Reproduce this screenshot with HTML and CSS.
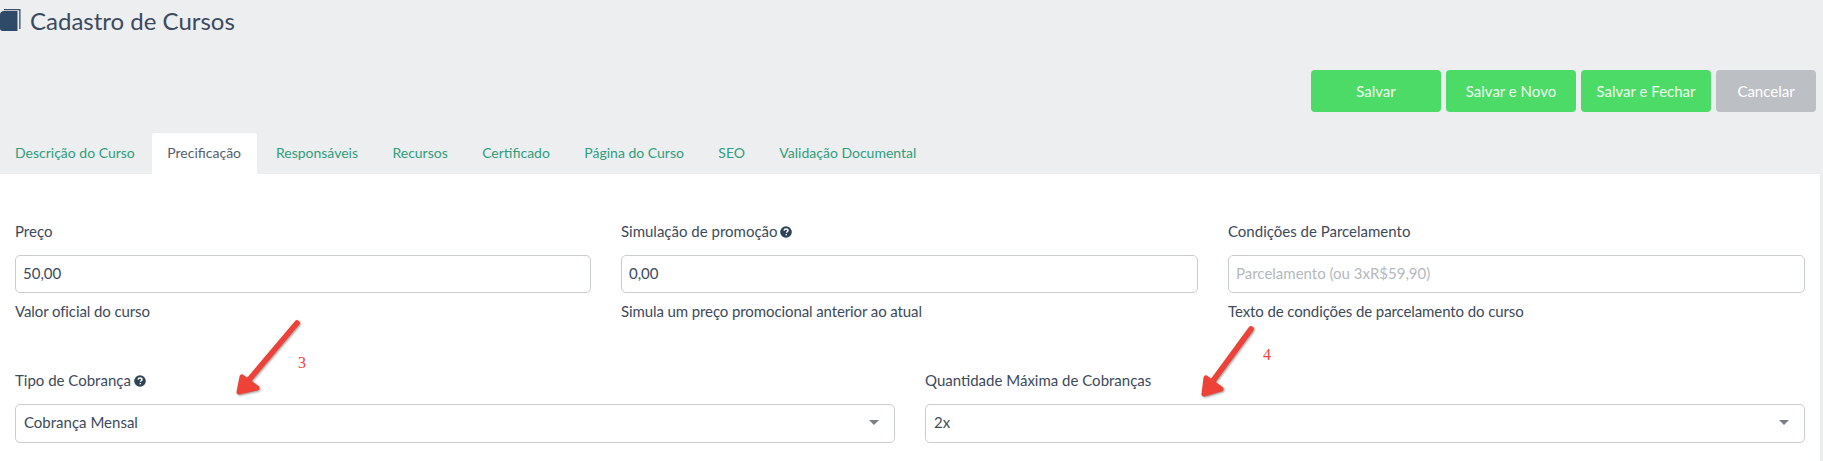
FILE: index.html
```html
<!DOCTYPE html>
<html lang="pt-BR">
<head>
<meta charset="utf-8">
<title>Cadastro de Cursos</title>
<link rel="stylesheet" href="styles.css">
</head>
<body>
<div class="page">
  <header class="head">
    <h1 class="title">
      <svg class="book" viewBox="0 0 21 22" aria-hidden="true"><path class="book-back" d="M4 0h16.500v20h-1.300V1.200H4z"/><path class="book-front" d="M4 2H17.500V22H2.500C1 22 0 21 0 19.500V6C0 3.500 1.500 2 4 2z"/></svg>
      <span>Cadastro de Cursos</span>
    </h1>
    <div class="actions">
      <button class="btn btn-green">Salvar</button>
      <button class="btn btn-green">Salvar e Novo</button>
      <button class="btn btn-green">Salvar e Fechar</button>
      <button class="btn btn-gray">Cancelar</button>
    </div>
  </header>
  <nav class="tabs">
    <a class="tab">Descrição do Curso</a>
    <a class="tab active">Precificação</a>
    <a class="tab">Responsáveis</a>
    <a class="tab">Recursos</a>
    <a class="tab">Certificado</a>
    <a class="tab">Página do Curso</a>
    <a class="tab">SEO</a>
    <a class="tab">Validação Documental</a>
  </nav>
  <main class="panel">
    <div class="row row-3">
      <div class="field">
        <label class="lbl">Preço</label>
        <input class="ctl" value="50,00">
        <p class="help">Valor oficial do curso</p>
      </div>
      <div class="field">
        <label class="lbl">Simulação de promoção <svg class="q" viewBox="0 0 14 14" aria-hidden="true"><circle cx="7" cy="7" r="6.800"/><path class="q-mark" d="M4.800 5.400c.1-1.300 1-2 2.300-2 1.300 0 2.200.8 2.200 1.800 0 1.500-1.700 1.500-1.700 2.800"/><rect class="q-dot" x="6.500" y="9.300" width="1.600" height="1.600"/></svg></label>
        <input class="ctl" value="0,00">
        <p class="help">Simula um preço promocional anterior ao atual</p>
      </div>
      <div class="field">
        <label class="lbl">Condições de Parcelamento</label>
        <input class="ctl" placeholder="Parcelamento (ou 3xR$59,90)">
        <p class="help">Texto de condições de parcelamento do curso</p>
      </div>
    </div>
    <div class="row row-2">
      <div class="field">
        <label class="lbl">Tipo de Cobrança <svg class="q" viewBox="0 0 14 14" aria-hidden="true"><circle cx="7" cy="7" r="6.800"/><path class="q-mark" d="M4.800 5.400c.1-1.300 1-2 2.300-2 1.300 0 2.200.8 2.200 1.800 0 1.500-1.700 1.500-1.700 2.800"/><rect class="q-dot" x="6.500" y="9.300" width="1.600" height="1.600"/></svg></label>
        <div class="ctl sel"><span>Cobrança Mensal</span><i class="caret"></i></div>
      </div>
      <div class="field">
        <label class="lbl">Quantidade Máxima de Cobranças</label>
        <div class="ctl sel"><span>2x</span><i class="caret"></i></div>
      </div>
    </div>
  </main>
  <svg class="arrow arrow-3" viewBox="0 0 72 80" aria-hidden="true"><path d="M65 5 10 70"/><path class="arrow-head" d="M10 59 7 74 25 70z"/></svg>
  <span class="mark mark-3">3</span>
  <svg class="arrow arrow-4" viewBox="0 0 72 80" aria-hidden="true"><path d="M56 6 12 66"/><path class="arrow-head" d="M11 55 9 71 26 66z"/></svg>
  <span class="mark mark-4">4</span>
</div>
</body>
</html>
```
FILE: styles.css
```css
* { box-sizing: border-box; }
html, body { margin: 0; height: 100%; }
body {
  background: #edeef0;
  color: #3c4a5b;
  font-family: Lato, "Liberation Sans", sans-serif;
  font-size: 15px;
  overflow: hidden;
}
.page { position: relative; height: 461px; width: 1823px; overflow: hidden; }
.head { height: 133px; padding-top: 8px; display: flex; flex-direction: column; }
.title {
  margin: 0;
  display: flex;
  align-items: flex-start;
  gap: 9px;
  font-size: 24px;
  font-weight: 400;
  line-height: 29px;
  color: #3b4a5e;
}
.title span { margin-top: -2px; }
.book { width: 21px; height: 22px; margin-top: 1px; flex: none; }
.book-back { fill: #3b5068; }
.book-front { fill: #2f4a68; }
.actions {
  margin-top: 35px;
  display: flex;
  justify-content: flex-end;
  gap: 5px;
  padding-right: 7px;
}
.btn {
  width: 130px;
  height: 42px;
  border: 0;
  border-radius: 4px;
  color: #fff;
  font: 15px Lato, "Liberation Sans", sans-serif;
}
.btn-green { background: #4cdb66; color: #ecfbee; }
.btn-gray { width: 100px; background: #bcc0c5; }
.tabs { display: flex; height: 41px; gap: 4.400px; font-size: 14px; }
.tab {
  padding: 0 15px;
  line-height: 39px;
  color: #2f9e7c;
  white-space: nowrap;
}
.tab:first-child { padding-right: 12.600px; }
.tab.active { background: #fff; color: #56606b; border-radius: 3px 3px 0 0; padding: 0 15.500px; }
.panel { width: 1820px; height: 287px; background: #fff; padding: 48px 15px 0; }
.row { display: grid; column-gap: 30px; }
.row-3 { grid-template-columns: 576px 577px 577px; height: 149px; }
.row-2 { grid-template-columns: repeat(2, 1fr); }
.lbl { display: block; height: 33px; line-height: 18px; white-space: nowrap; }
.q { width: 12px; height: 12px; margin-left: -1px; vertical-align: -1px; fill: #2f4157; }
.q-mark { fill: none; stroke: #fff; stroke-width: 1.800; }
.q-dot { fill: #fff; }
.ctl {
  display: block;
  width: 100%;
  height: 38px;
  border: 1px solid #c9ccd0;
  border-radius: 5px;
  padding: 0 7px 2px;
  background: #fff;
  color: #3c4a5b;
  font: 15px Lato, "Liberation Sans", sans-serif;
  outline: 0;
}
.ctl::placeholder { color: #b4b9be; opacity: 1; }
.help { margin: 9px 0 0; line-height: 18px; letter-spacing: -0.1px; }
.sel { height: 39px; display: flex; align-items: center; justify-content: space-between; padding: 0 15px 3px 8px; }
.caret { width: 0; height: 0; border: 5px solid transparent; border-top: 5px solid #7b7f85; border-bottom: 0; }
.arrow {
  position: absolute;
  width: 72px;
  height: 80px;
  fill: none;
  stroke: #ee4238;
  stroke-width: 5.500;
  stroke-linecap: round;
  filter: drop-shadow(1px 1px 1px #9a9a9a);
}
.arrow .arrow-head { fill: #ee4238; stroke-linejoin: round; stroke-width: 5; }
.arrow-3 { left: 232px; top: 318px; }
.arrow-4 { left: 1195px; top: 323px; }
.mark { position: absolute; color: #f4433c; font-family: "Liberation Serif", serif; font-size: 16px; line-height: 18px; }
.mark-3 { left: 298px; top: 354px; }
.mark-4 { left: 1263px; top: 346px; }
```
